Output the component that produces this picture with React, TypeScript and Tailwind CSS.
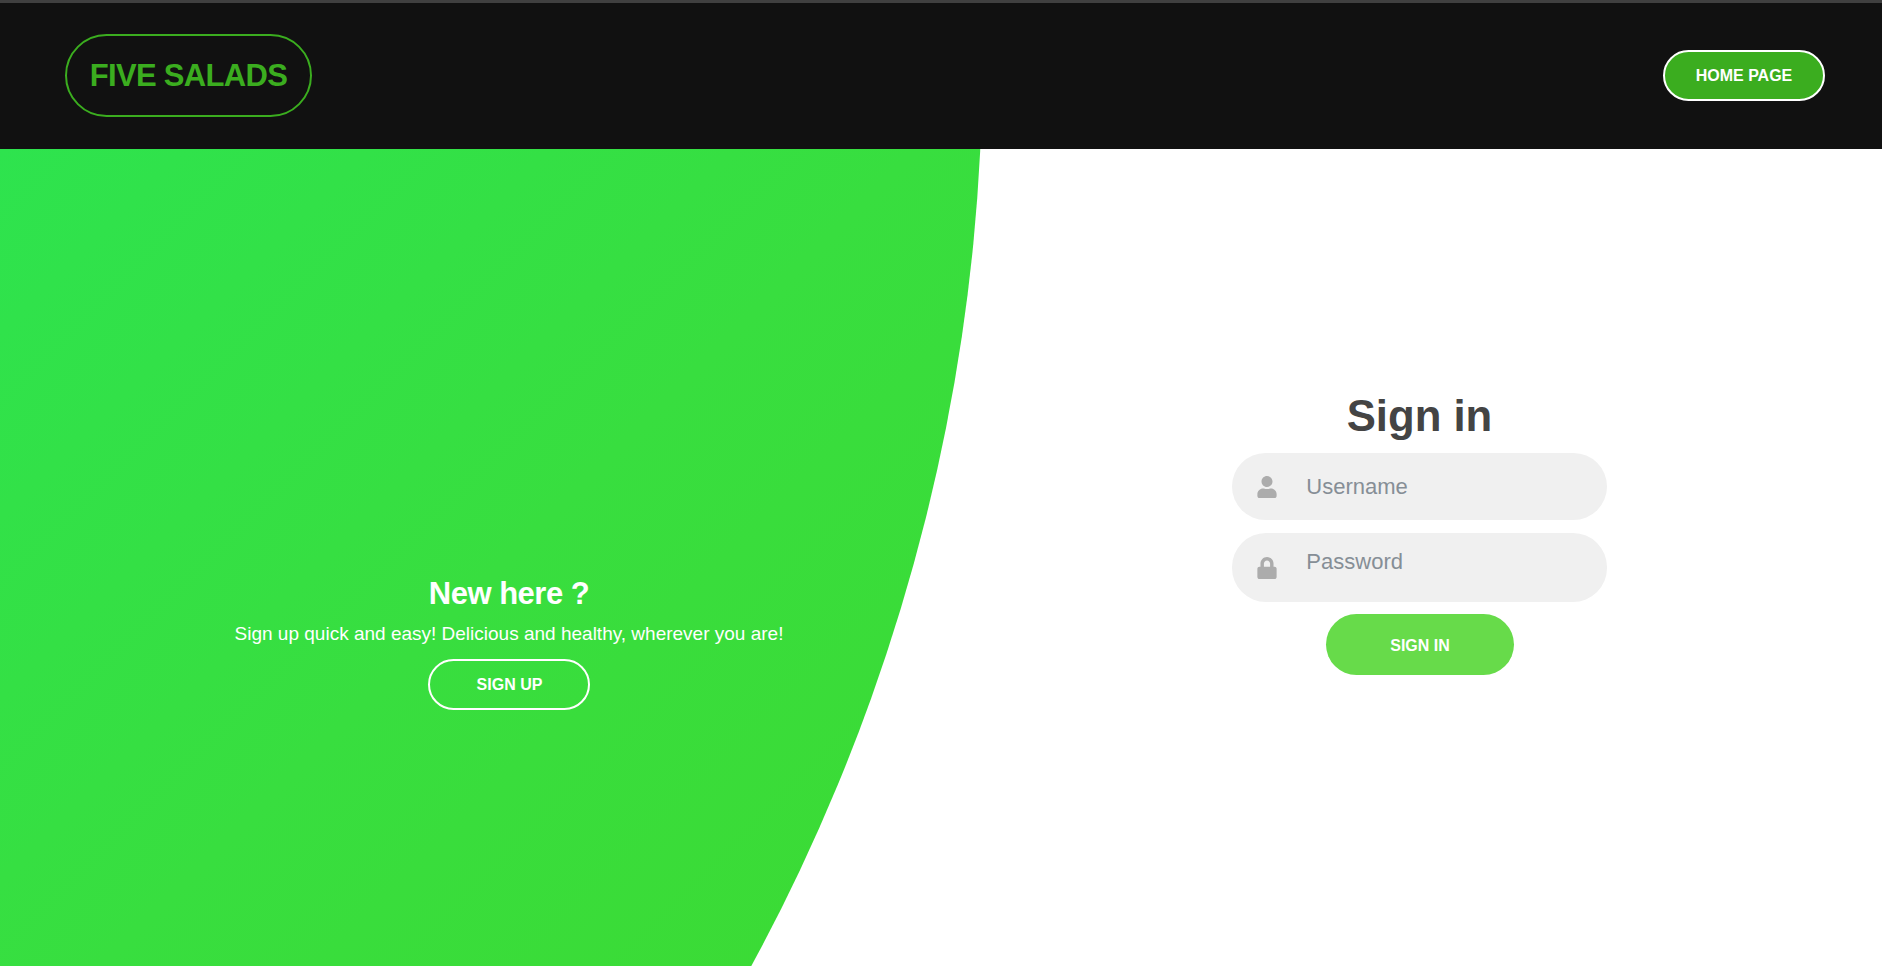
import { FaLock, FaUser } from "react-icons/fa";
import type { ReactNode } from "react";

function Field({ icon, children }: { icon: ReactNode; children: ReactNode }) {
  return (
    <div className="grid w-[375px] grid-cols-[15%_85%] rounded-[34px] bg-[#f0f0f0] pl-[6px]">
      <span className="flex items-center justify-center pl-[2px] text-[22px] text-[#acacac]">{icon}</span>
      {children}
    </div>
  );
}

export default function App() {
  return (
    <div className="flex h-[966px] w-full flex-col overflow-hidden bg-white font-['Liberation_Sans',Arial,sans-serif]">
      <header className="flex h-[149px] shrink-0 items-center justify-between border-t-[3px] border-[#404040] bg-[#111111] pr-[57px] pb-[2px] pl-[65px]">
        <a className="flex h-[83px] w-[247px] items-center justify-center rounded-[42px] border-2 border-[#3bad1f] pt-[1px] text-[31px] leading-none font-bold tracking-[-0.7px] text-[#3bad1f]">
          FIVE SALADS
        </a>
        <button className="h-[51px] w-[162px] rounded-[26px] border-2 border-white bg-[#3bad1f] pt-[1px] text-[16px] font-semibold text-white">
          HOME PAGE
        </button>
      </header>
      <main className="grid flex-1 grid-cols-[1018px_1fr]">
        <section className="flex flex-col items-center bg-[linear-gradient(135deg,#2ee34e_0%,#38de3f_50%,#3cda32_100%)] pt-[424px] text-white [clip-path:circle(1902.5px_at_-920px_-92px)]">
          <h3 className="pt-[1px] text-[31px] leading-[39px] font-bold tracking-[-0.5px]">New here ?</h3>
          <p className="mt-[8px] text-[19px] leading-[26px]">
            Sign up quick and easy! Delicious and healthy, wherever you are!
          </p>
          <button className="mt-[12px] h-[51px] w-[162px] rounded-[26px] border-2 border-white pl-[1px] text-[16px] font-semibold">
            SIGN UP
          </button>
        </section>
        <form className="flex w-[803px] flex-col items-center pt-[241px]">
          <h2 className="mb-[11px] text-[43.7px] leading-[52px] font-bold text-[#444444]">Sign in</h2>
          <Field icon={<FaUser />}>
            <input
              placeholder="Username"
              className="h-[67px] pl-[13px] text-[22px] outline-none placeholder:text-[#868e96]"
            />
          </Field>
          <div className="h-[13px]" />
          <Field icon={<FaLock />}>
            <input
              type="password"
              placeholder="Password"
              className="h-[69px] pb-[12px] pl-[13px] text-[22px] outline-none placeholder:text-[#868e96]"
            />
          </Field>
          <button className="mt-[12px] h-[61px] w-[188px] rounded-[31px] bg-[#67db4a] pt-[2px] pl-[1px] text-[16px] font-semibold text-white">
            SIGN IN
          </button>
        </form>
      </main>
    </div>
  );
}
